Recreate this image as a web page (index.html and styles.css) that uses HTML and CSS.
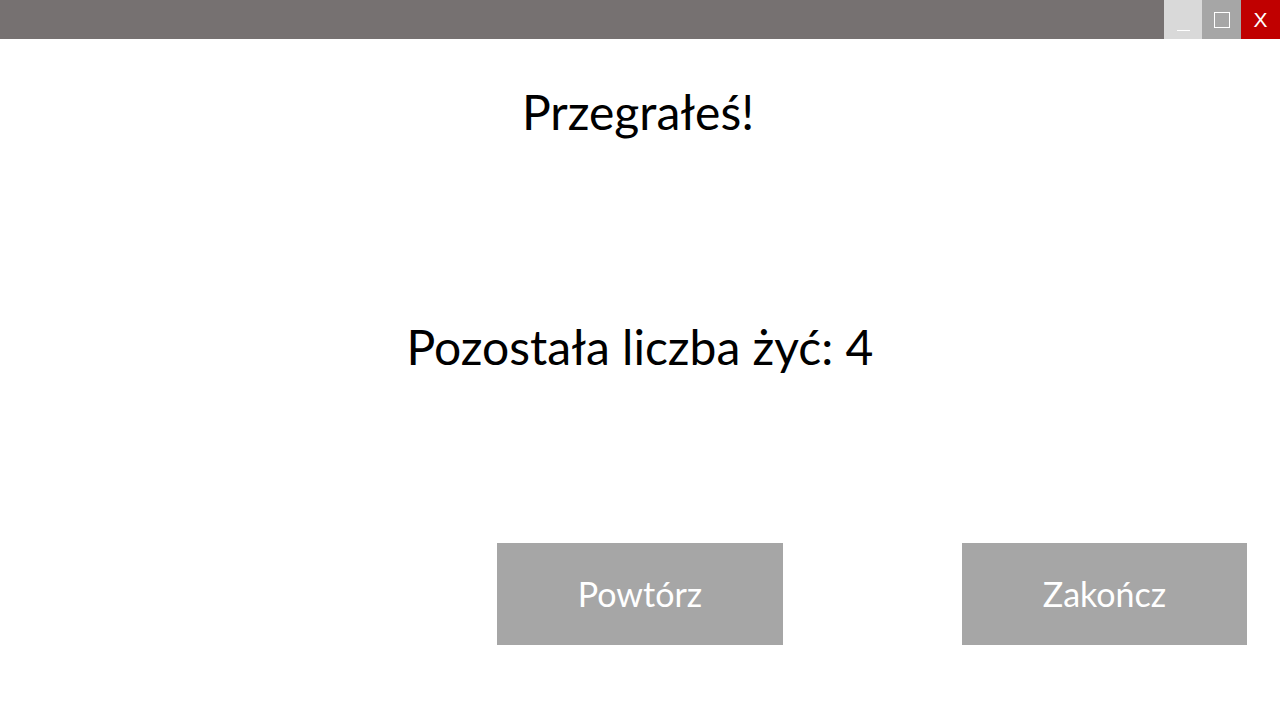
FILE: index.html
```html
<!DOCTYPE html>
<html lang="pl">
<head>
<meta charset="utf-8">
<title>Przegrałeś!</title>
<link rel="stylesheet" href="styles.css">
</head>
<body>
<div class="titlebar">
  <div class="controls">
    <div class="ctl ctl-min"><span class="min-line"></span></div>
    <div class="ctl ctl-max"><span class="max-box"></span></div>
    <div class="ctl ctl-close">X</div>
  </div>
</div>
<main class="screen">
  <div class="heading">Przegrałeś!</div>
  <div class="lives">Pozostała liczba żyć: 4</div>
  <div class="actions">
    <div class="btn btn-retry">Powtórz</div>
    <div class="btn btn-quit">Zakończ</div>
  </div>
</main>
</body>
</html>
```

FILE: styles.css
```css
html, body {
  margin: 0;
  padding: 0;
  background: #ffffff;
  width: 1280px;
  height: 720px;
  overflow: hidden;
  font-family: "Lato", "Open Sans", sans-serif;
}

.titlebar {
  height: 39px;
  background: #767171;
  display: flex;
  justify-content: flex-end;
}

.controls {
  display: flex;
}

.ctl {
  height: 39px;
  display: flex;
  align-items: center;
  justify-content: center;
  color: #ffffff;
}

.ctl-min {
  width: 38px;
  background: #d9d9d9;
  align-items: flex-end;
}

.min-line {
  width: 13px;
  height: 1px;
  background: #ffffff;
  margin-bottom: 8px;
}

.ctl-max {
  width: 39px;
  background: #a6a6a6;
}

.max-box {
  width: 14px;
  height: 14px;
  border: 1px solid #ffffff;
}

.ctl-close {
  width: 39px;
  background: #c00000;
  font-family: "Liberation Sans", sans-serif;
  font-size: 21px;
}

.screen {
  display: flex;
  flex-direction: column;
}

.heading {
  height: 146px;
  line-height: 146px;
  text-align: center;
  font-size: 48px;
  color: #000000;
  padding-right: 4px;
}

.lives {
  height: 324px;
  line-height: 324px;
  text-align: center;
  font-size: 48px;
  color: #000000;
}

.actions {
  display: flex;
  gap: 179px;
  padding-left: 497px;
  margin-top: 34px;
}

.btn {
  height: 102px;
  line-height: 102px;
  background: #a6a6a6;
  color: #ffffff;
  text-align: center;
  font-size: 34px;
}

.btn-retry {
  width: 286px;
}

.btn-quit {
  width: 285px;
}
```
